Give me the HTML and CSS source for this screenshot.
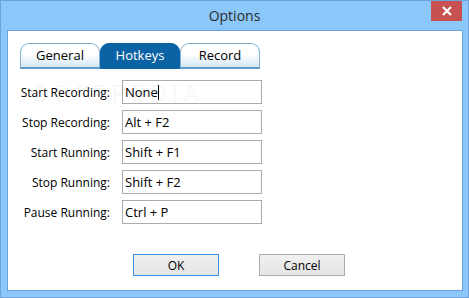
FILE: index.html
```html
<!DOCTYPE html>
<html lang="en">
<head>
  <meta charset="UTF-8">
  <title>Options</title>
  <link rel="stylesheet" href="styles.css">
</head>
<body>

  <div class="window">
    <div class="titlebar">
      <span class="title">Options</span>
      <button class="close" aria-label="Close">
        <svg width="12" height="10" viewBox="0 0 12 10">
          <path d="M2 1 L10 9 M10 1 L2 9" stroke="#fff" stroke-width="2.2" fill="none"/>
        </svg>
      </button>
    </div>

    <div class="client">
      <div class="tabs">
        <div class="tab">General</div>
        <div class="tab active">Hotkeys</div>
        <div class="tab">Record</div>
      </div>

      <div class="hotkeys">
        <span class="watermark">SOFTPEDIA</span>
        <label>Start Recording:</label>
        <div class="field">None<span class="caret"></span></div>
        <label>Stop Recording:</label>
        <div class="field">Alt + F2</div>
        <label>Start Running:</label>
        <div class="field">Shift + F1</div>
        <label>Stop Running:</label>
        <div class="field">Shift + F2</div>
        <label>Pause Running:</label>
        <div class="field">Ctrl + P</div>
      </div>

      <div class="buttons">
        <button class="btn default">OK</button>
        <button class="btn">Cancel</button>
      </div>
    </div>
  </div>

</body>
</html>
```

FILE: styles.css
```css
body {
  margin: 0;
  font-family: "Open Sans", "Noto Sans", sans-serif;
  font-size: 12px;
  color: #000;
}

.window {
  width: 469px;
  height: 298px;
  box-sizing: border-box;
  background-color: #8bc7f9;
  border: 1px solid #6ea3d9;
  position: relative;
}

.titlebar {
  height: 29px;
  display: flex;
  align-items: center;
  justify-content: center;
}

.title {
  font-size: 14px;
  color: #2b2b2b;
  margin-top: -1px;
}

.close {
  position: absolute;
  top: 0;
  right: 6px;
  width: 31px;
  height: 20px;
  border: none;
  padding: 0;
  background-color: #c75050;
  display: flex;
  align-items: center;
  justify-content: center;
}

.client {
  margin: 0 5px 0 6px;
  height: 261px;
  box-sizing: border-box;
  border: 1px solid #6aa3dc;
  background: white;
  padding: 12px 0 0 12px;
}

.tabs {
  display: flex;
}

.tab {
  width: 80px;
  height: 26px;
  box-sizing: border-box;
  border: 1px solid #80b3d6;
  border-bottom: 2px solid #5d9bc8;
  border-radius: 9px 9px 0 0;
  background: linear-gradient(#ffffff 45%, #d3e6f3);
  display: flex;
  align-items: center;
  justify-content: center;
  font-size: 13px;
  padding-bottom: 1px;
}

.tab.active {
  background: #0b62a4;
  border-color: #0b62a4;
  color: white;
}

.hotkeys {
  position: relative;
  display: grid;
  grid-template-columns: 90px 140px;
  grid-auto-rows: 24px;
  column-gap: 12px;
  row-gap: 6px;
  margin-top: 11px;
}

.hotkeys label {
  text-align: right;
  align-self: center;
  font-size: 12px;
  white-space: nowrap;
}

.field {
  border: 1px solid #ababab;
  padding: 0 2px;
  display: flex;
  align-items: center;
  font-size: 13px;
}

.caret {
  display: inline-block;
  width: 1px;
  height: 15px;
  background: #000;
}

.watermark {
  position: absolute;
  left: 14px;
  top: -4px;
  font-size: 24px;
  letter-spacing: 5px;
  color: rgba(0, 0, 0, 0.045);
  pointer-events: none;
}

.buttons {
  display: flex;
  gap: 40px;
  margin: 30px 0 0 113px;
}

.btn {
  width: 86px;
  height: 22px;
  font-family: inherit;
  font-size: 12px;
  border: 1px solid #acacac;
  background: linear-gradient(#f0f0f0, #e5e5e5);
  padding: 0;
}

.btn.default {
  border-color: #3c8fe0;
}
```
